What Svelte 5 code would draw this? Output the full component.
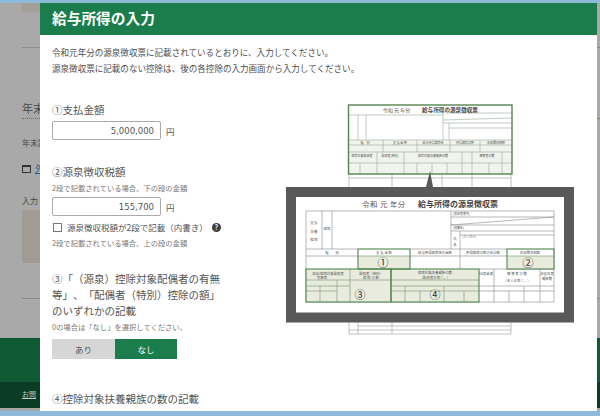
<script>
  // lines of the big slip, [x1, y1, x2, y2], in page pixels
  const bigLines = [
    [322, 211, 322, 249], [332, 211, 332, 249], [306, 249, 358, 249], [306, 256, 358, 256],
    [410, 256, 507, 256], [451, 217, 554, 217], [451, 225, 554, 217], [451, 225, 554, 225],
    [451, 231, 554, 231], [460, 235, 554, 235], [460, 231, 460, 269], [451, 211, 451, 249],
    [410, 249, 507, 249], [479, 269, 554, 269], [479, 286, 554, 286], [479, 291, 554, 291],
    [494, 269, 494, 302], [540, 269, 540, 302], [509, 291, 509, 302], [524, 286, 524, 302]
  ]
  const greenInner = [
    [358, 256, 410, 256], [507, 256, 554, 256], [306, 280, 391, 280], [306, 286, 350, 286],
    [306, 291, 337, 291], [320, 286, 320, 302], [337, 280, 337, 302], [350, 269, 350, 302],
    [391, 280, 479, 280], [391, 286, 479, 286], [391, 291, 479, 291], [405, 286, 405, 302],
    [420, 291, 420, 302], [444, 286, 444, 302], [464, 291, 464, 302]
  ]
  const smallLines = [
    [348, 115, 443, 115], [358, 115, 358, 140], [366, 115, 366, 140], [443, 113, 443, 140],
    [443, 113, 512, 113], [443, 120, 512, 118], [443, 123, 512, 123], [449, 128, 512, 128],
    [449, 123, 449, 140], [348, 140, 512, 140], [348, 145, 512, 145], [348, 152, 512, 152],
    [383, 140, 383, 152], [417, 140, 417, 152], [450, 140, 450, 152], [480, 140, 480, 152],
    [348, 163, 512, 163], [377, 152, 377, 174], [404, 152, 404, 174], [462, 152, 462, 174],
    [472, 152, 472, 174], [502, 152, 502, 174], [360, 163, 360, 174], [417, 163, 417, 174],
    [432, 163, 432, 174], [447, 163, 447, 174], [489, 163, 489, 174]
  ]
  const stubLines = [
    [349, 174, 349, 187], [392, 174, 392, 187], [442, 174, 442, 187], [472, 174, 472, 187],
    [511, 174, 511, 187], [349, 178, 511, 178], [349, 322, 349, 334], [358, 322, 358, 334],
    [392, 322, 392, 334], [511, 322, 511, 334], [358, 326, 511, 326], [349, 330, 511, 330],
    [349, 334, 511, 334]
  ]
  const bigLabels = [
    [314, 224, '支 払'], [314, 233, '扶養'], [314, 241, '控 除'], [327, 230, '控除'],
    [332, 254, '種　　別'], [384, 254, '支 払 金 額'], [435, 254, '給与所得控除後の金額'],
    [483, 254, '所得控除の額の合計額'], [530, 254, '源泉徴収税額'],
    [328, 275, '源泉)控除対象配偶者'], [322, 279, '有無等'], [371, 275, '配偶者（特別）'],
    [371, 279, '控 除 の 額'], [435, 274, '控除対象扶養親族の数'], [435, 279, '（配偶者を除く。）'],
    [486, 275, '16歳未満'], [517, 275, '障 害 者 の 数'], [517, 282, '（本人を除く。）'],
    [547, 275, '非居住者'], [547, 280, '親族数']
  ]
  const smallLabels = [
    [365, 143.5, '種　別'], [400, 143.5, '支 払 金 額'], [433, 143.5, '給与所得控除後'],
    [465, 143.5, '所得控除の額'], [496, 143.5, '源泉徴収税額'], [362, 157, '控除対象配偶者'],
    [390, 157, '配偶者(特別)'], [433, 157, '控除対象扶養親族の数'], [487, 157, '障害者の数']
  ]
</script>

<div class="page">
  <div class="topstrip"></div>
  <div class="behind">
    <div class="tab"></div>
    <div class="rule"></div>
    <h2>年末</h2>
    <p class="behind-text">年末調</p>
    <p class="behind-link"><span class="win"></span><a href="#top">外</a></p>
    <p class="behind-text entry">入力</p>
    <div class="placeholder"></div>
    <div class="rule second"></div>
    <div class="footer-a"></div>
    <div class="footer-b"><a href="#top">お問</a></div>
  </div>
  <div class="bottomstrip"></div>

  <section class="modal">
    <header>給与所得の入力</header>
    <div class="lead">
      <p>令和元年分の源泉徴収票に記載されているとおりに、入力してください。</p>
      <p>源泉徴収票に記載のない控除は、後の各控除の入力画面から入力してください。</p>
    </div>
    <div class="columns">
      <div class="form">
        <h3>①支払金額</h3>
        <div class="money"><input value="5,000,000" readonly /><span>円</span></div>

        <h3 class="tax">②源泉徴収税額</h3>
        <p class="note spaced">2段で記載されている場合、下の段の金額</p>
        <div class="money"><input value="155,700" readonly /><span>円</span></div>
        <div class="check">
          <span class="box"></span>
          <span>源泉徴収税額が2段で記載（内書き）</span>
          <span class="help">?</span>
        </div>
        <p class="note">2段で記載されている場合、上の段の金額</p>

        <h3 class="spouse">③「（源泉）控除対象配偶者の有無等」、「配偶者（特別）控除の額」のいずれかの記載</h3>
        <p class="note">0の場合は「なし」を選択してください。</p>
        <div class="toggle">
          <button>あり</button>
          <button class="on">なし</button>
        </div>

        <h3 class="dependents">④控除対象扶養親族の数の記載</h3>
      </div>

      <svg class="slip" viewBox="285 100 290 240" width="290" height="240" aria-label="給与所得の源泉徴収票の記載例">
        <!-- small slip behind -->
        <rect x="348" y="105" width="164" height="69" fill="#fff" />
        <rect x="348" y="140" width="164" height="34" fill="#f0f4ec" />
        {#each smallLines as l}
          <line x1={l[0]} y1={l[1]} x2={l[2]} y2={l[3]} stroke="#9aa89a" stroke-width="0.6" />
        {/each}
        {#each stubLines as l}
          <line x1={l[0]} y1={l[1]} x2={l[2]} y2={l[3]} stroke="#aaa" stroke-width="0.7" />
        {/each}
        <rect x="348.500" y="105" width="163.500" height="69" fill="none" stroke="#53854f" stroke-width="1.400" />
        <text class="t" x="383" y="112" font-size="5">令和 元 年分</text>
        <text class="t b" x="422" y="112" font-size="5.600">給与所得の源泉徴収票</text>
        {#each smallLabels as l}
          <text class="t mid" x={l[0]} y={l[1]} font-size="3">{l[2]}</text>
        {/each}

        <!-- big slip with the dark frame and callout -->
        <polygon points="426,187 430,171 433,187" fill="#595959" />
        <rect x="291" y="192" width="278" height="125.500" fill="#fff" stroke="#595959" stroke-width="10" />
        <text class="t" x="362" y="207" font-size="7.400" letter-spacing="0.500">令和 元 年分</text>
        <text class="t b" x="418" y="207" font-size="8">給与所得の源泉徴収票</text>

        <rect x="306" y="211" width="248" height="91" fill="none" stroke="#999" stroke-width="0.700" />
        {#each bigLines as l}
          <line x1={l[0]} y1={l[1]} x2={l[2]} y2={l[3]} stroke="#999" stroke-width="0.7" />
        {/each}
        <rect x="358" y="256" width="52" height="13" fill="#e9ecdd" />
        <rect x="507" y="256" width="47" height="13" fill="#e9ecdd" />
        <rect x="306" y="269" width="173" height="33" fill="#e9ecdd" />
        {#each greenInner as l}
          <line x1={l[0]} y1={l[1]} x2={l[2]} y2={l[3]} stroke="#86a083" stroke-width="0.7" />
        {/each}
        <g fill="none" stroke="#4f8650" stroke-width="1.100">
          <rect x="358" y="249" width="52" height="20" />
          <rect x="507" y="249" width="47" height="20" />
          <rect x="306" y="269" width="85" height="33" />
          <rect x="391" y="269" width="88" height="33" />
        </g>
        <text class="t" x="453" y="215" font-size="3">(受給者番号)</text>
        <text class="t" x="453" y="229" font-size="3">(役職名)</text>
        <text class="t" x="462" y="238" font-size="3">(フリガナ)</text>
        <text class="t mid" x="455" y="240" font-size="3.400">氏</text>
        <text class="t mid" x="455" y="246" font-size="3.400">名</text>
        {#each bigLabels as l}
          <text class="t mid" x={l[0]} y={l[1]} font-size="3.4">{l[2]}</text>
        {/each}
        <text class="num" x="383" y="267">①</text>
        <text class="num" x="528" y="267">②</text>
        <text class="num" x="360" y="299">③</text>
        <text class="num" x="435" y="299">④</text>
      </svg>
    </div>
  </section>
</div>

<style>
  :global(body) {
    margin: 0;
    font-family: "Noto Sans CJK JP", "Noto Sans", sans-serif;
    overflow: hidden;
    text-spacing-trim: space-all;
  }

  .page {
    position: relative;
    width: 600px;
    height: 416px;
    overflow: hidden;
    background: #a9a9a9;
    color: #555;
    display: flex;
    flex-direction: column;
  }

  .topstrip {
    height: 3px;
    background: #8fb9d8;
  }

  .bottomstrip {
    height: 5px;
    background: #8fb9d8;
  }

  .behind {
    flex: 1;
    min-height: 0;
    padding-left: 22px;
    display: flex;
    flex-direction: column;
    color: #484848;
  }

  .tab {
    width: 30px;
    height: 9px;
    background: #a49e98;
  }

  .rule {
    height: 1px;
    background: #8d8d8d;
    margin-top: 35px;
  }

  .behind h2 {
    margin: 51px 0 0;
    height: 19px;
    font-size: 11px;
    line-height: 19px;
    font-weight: 400;
    border-bottom: 1px dotted #7d7254;
  }

  .behind p {
    margin: 0;
    font-size: 8px;
    line-height: 12px;
  }

  .behind-text {
    padding-top: 18px;
  }

  .behind-link {
    margin-top: 14px !important;
    display: flex;
    align-items: center;
    gap: 4px;
  }

  .behind-link a {
    color: #2c5f8c;
    font-size: 9px;
  }

  .win {
    width: 7px;
    height: 5px;
    border: 1px solid #333;
    border-top-width: 2px;
  }

  .behind-text.entry {
    padding-top: 20px;
  }

  .placeholder {
    width: 18px;
    height: 53px;
    margin-top: 3px;
    background: #a09c95;
  }

  .rule.second {
    margin-top: 35px;
  }

  .footer-a {
    margin: 39px 0 0 -22px;
    height: 44px;
    background: #0f5a33;
  }

  .footer-b {
    margin-left: -22px;
    padding-left: 22px;
    height: 26px;
    background: #0b3d24;
    font-size: 7px;
    line-height: 24px;
  }

  .footer-b a {
    color: #bcc7c0;
  }

  /* dialog sits over the page */
  .modal {
    position: absolute;
    left: 40px;
    top: 3px;
    width: 557px;
    height: 408px;
    background: #fff;
    overflow: hidden;
  }

  .modal header {
    height: 32px;
    padding-left: 12px;
    background: #1a7d4b;
    color: #fff;
    font-size: 14.700px;
    font-weight: 700;
    line-height: 30px;
  }

  .lead {
    padding: 9px 12px 0;
  }

  .lead p {
    margin: 0;
    font-size: 8.550px;
    line-height: 16px;
    color: #4d4d4d;
  }

  .columns {
    display: flex;
  }

  .form {
    width: 171px;
    margin-left: 12px;
    padding-top: 26px;
    flex: none;
  }

  .slip {
    flex: none;
    margin: 24px 0 0 62px;
    display: block;
  }

  h3 {
    margin: 0;
    font-size: 10.500px;
    line-height: 16px;
    font-weight: 400;
    color: #555;
  }

  .tax {
    margin-top: 24px;
  }

  .spouse {
    margin-top: 22px;
  }

  .dependents {
    margin-top: 32px;
    white-space: nowrap;
  }

  .note {
    margin: 2px 0 0;
    font-size: 7.300px;
    line-height: 12px;
    color: #777;
  }

  .note.spaced {
    margin-bottom: 2px;
  }

  .money {
    display: flex;
    align-items: center;
    gap: 5px;
    margin-top: 3px;
    font-size: 8.500px;
  }

  .money input {
    box-sizing: border-box;
    width: 109px;
    height: 19px;
    padding: 0 6px;
    border: 1px solid #aaa;
    border-radius: 2px;
    background: #fff;
    color: #555;
    font-family: "DejaVu Sans", sans-serif;
    font-size: 8.500px;
    text-align: right;
    outline: none;
  }

  .check {
    display: flex;
    align-items: center;
    height: 16px;
    margin-top: 3px;
    font-size: 8.500px;
    white-space: nowrap;
  }

  .box {
    box-sizing: border-box;
    width: 9px;
    height: 9px;
    margin: 0 5px 0 1px;
    border: 1px solid #777;
    background: #fff;
  }

  .help {
    width: 9px;
    height: 9px;
    margin-left: 4px;
    border-radius: 50%;
    background: #3d3d3d;
    color: #fff;
    font-size: 7px;
    font-weight: 700;
    line-height: 9px;
    text-align: center;
  }

  .toggle {
    display: flex;
    margin-top: 6px;
  }

  .toggle button {
    width: 63px;
    height: 20px;
    padding: 0;
    border: none;
    background: #d6d6d6;
    color: #555;
    font-family: inherit;
    font-size: 8.500px;
  }

  .toggle button.on {
    width: 62px;
    background: #1a7d4b;
    color: #fff;
  }

  .t {
    fill: #555;
    font-family: "Noto Sans CJK JP", sans-serif;
  }

  .t.b {
    font-weight: 700;
    fill: #444;
  }

  .t.mid {
    text-anchor: middle;
  }

  .num {
    fill: #333;
    font-family: "Noto Sans CJK JP", sans-serif;
    font-size: 11px;
    text-anchor: middle;
  }
</style>
